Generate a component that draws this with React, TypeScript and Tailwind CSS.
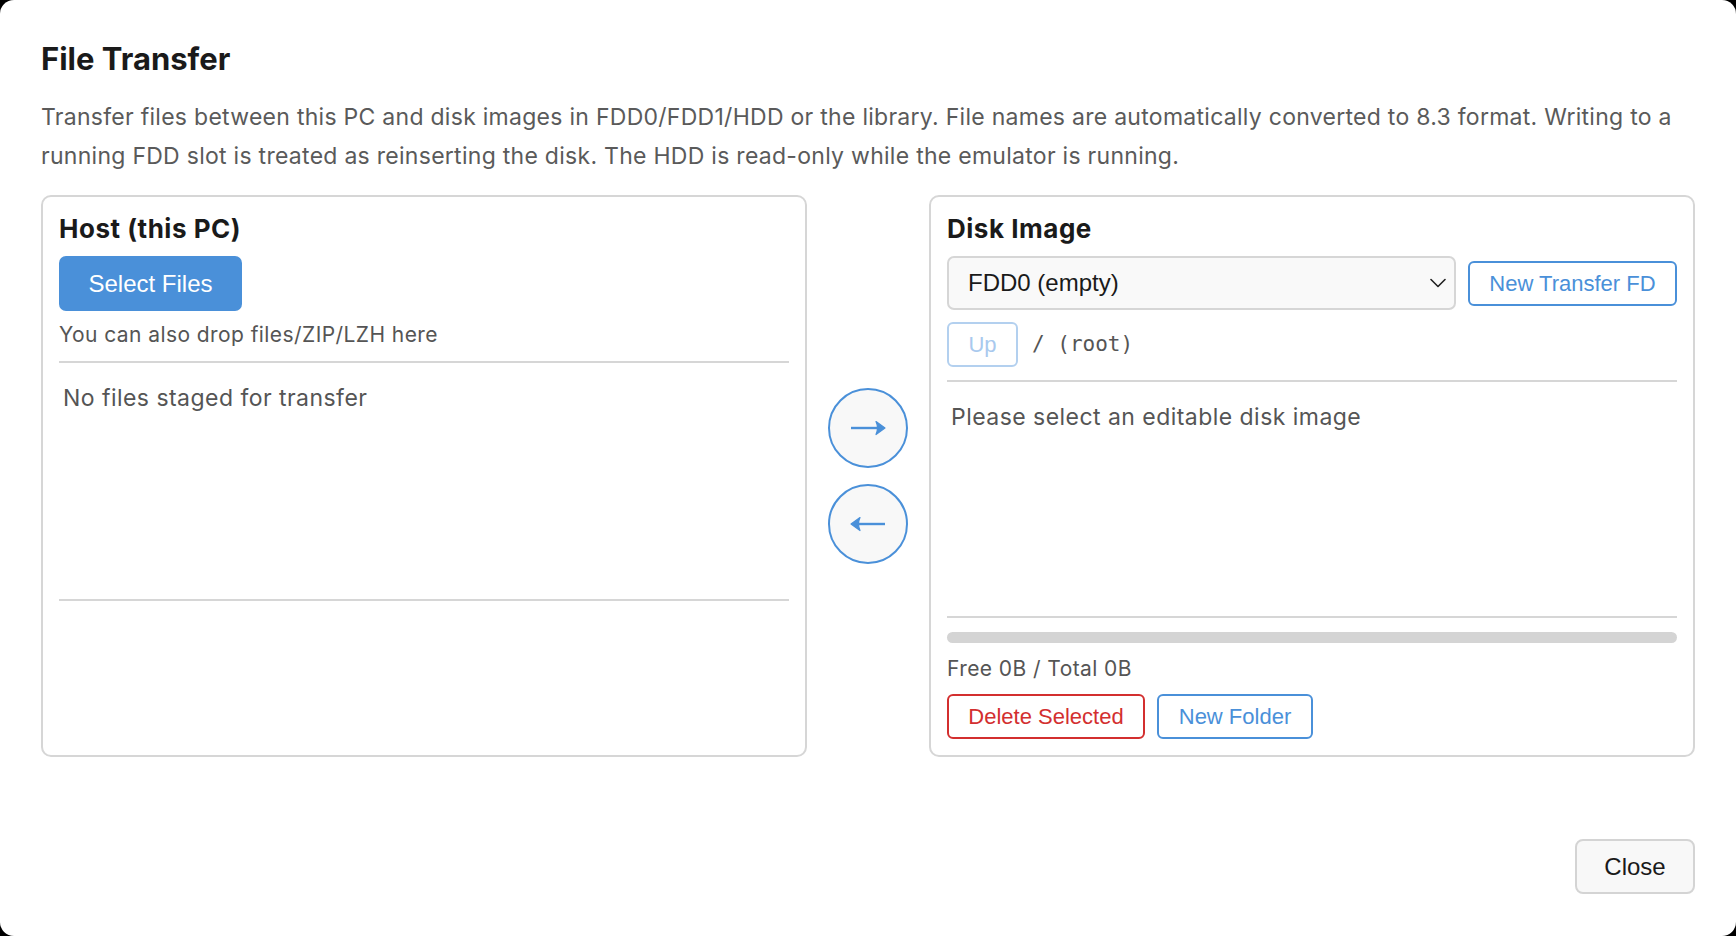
import React from "react";

const btnFont = "font-['Liberation_Sans',Arial,sans-serif]";

function ArrowIcon({ dir }: { dir: "right" | "left" }) {
  return (
    <svg
      width="36"
      height="16"
      viewBox="0 0 36 16"
      className={dir === "left" ? "-scale-x-100" : ""}
      fill="none"
    >
      <line x1="1" y1="8" x2="32" y2="8" stroke="#4a90d9" strokeWidth="2.4" />
      <path d="M26 1.5 L35 8 L26 14.5 Q29 8 26 1.5 Z" fill="#4a90d9" stroke="#4a90d9" strokeWidth="1.2" strokeLinejoin="round" />
    </svg>
  );
}

function Chevron() {
  return (
    <svg width="16" height="10" viewBox="0 0 16 10" fill="none">
      <path d="M1 1.5 L8 8.5 L15 1.5" stroke="#222" strokeWidth="1.6" strokeLinecap="round" strokeLinejoin="round" />
    </svg>
  );
}

function HostPanel() {
  return (
    <section className="flex-1 flex flex-col rounded-[10px] border-2 border-[#d6d6d6] px-4 pt-[16px] pb-4">
      <h2 className="text-[26px] leading-[32px] tracking-[0.02em] font-bold text-[#1a1a1a]">Host (this PC)</h2>
      <div className="mt-[11px]">
        <button className={`${btnFont} h-[55px] w-[183px] rounded-[7px] bg-[#4a90d9] text-[24px] text-white`}>
          Select Files
        </button>
      </div>
      <p className="mt-[10px] text-[21px] leading-[28px] tracking-[0.02em] text-[#555]">You can also drop files/ZIP/LZH here</p>
      <div className="mt-3 h-[240px] border-y-2 border-[#d6d6d6] px-1 pt-[19px]">
        <p className="text-[23px] leading-[32px] tracking-[0.02em] text-[#555]">No files staged for transfer</p>
      </div>
    </section>
  );
}

function DiskPanel() {
  return (
    <section className="flex-1 flex flex-col rounded-[10px] border-2 border-[#d6d6d6] px-4 pt-[16px] pb-4">
      <h2 className="text-[26px] leading-[32px] tracking-[0.02em] font-bold text-[#1a1a1a]">Disk Image</h2>
      <div className="mt-[11px] flex items-center gap-3">
        <div className={`${btnFont} flex h-[54px] flex-1 items-center justify-between rounded-[7px] border-2 border-[#d6d6d6] bg-[#f9f9f9] pl-[19px] pr-[8px] text-[24px] text-[#1a1a1a]`}>
          <span>FDD0 (empty)</span>
          <Chevron />
        </div>
        <button className={`${btnFont} h-[45px] w-[209px] rounded-[6px] border-2 border-[#4a90d9] bg-white text-[22px] text-[#4a90d9]`}>
          New Transfer FD
        </button>
      </div>
      <div className="mt-[12px] flex items-center gap-[14px]">
        <button className={`${btnFont} h-[45px] w-[71px] rounded-[6px] border-2 border-[#b3d0ef] bg-white text-[22px] text-[#a9c9ee]`}>
          Up
        </button>
        <span className="font-['DejaVu_Sans_Mono',monospace] text-[21px] text-[#555]">/ (root)</span>
      </div>
      <div className="mt-[13px] h-[242px] border-y-2 border-[#d6d6d6] px-1 pt-[19px]">
        <p className="text-[23px] leading-[32px] tracking-[0.02em] text-[#555]">Please select an editable disk image</p>
      </div>
      <div className="mt-[14px] h-[11px] rounded-full bg-[#d4d4d4]" />
      <p className="mt-[12px] text-[21px] leading-[28px] tracking-[0.02em] text-[#555]">Free 0B / Total 0B</p>
      <div className="mt-[11px] flex gap-3">
        <button className={`${btnFont} h-[45px] w-[198px] rounded-[6px] border-2 border-[#d32f2f] bg-white text-[22px] text-[#d32f2f]`}>
          Delete Selected
        </button>
        <button className={`${btnFont} h-[45px] w-[156px] rounded-[6px] border-2 border-[#4a90d9] bg-white text-[22px] text-[#4a90d9]`}>
          New Folder
        </button>
      </div>
    </section>
  );
}

export default function App() {
  return (
    <div className="h-screen w-full bg-black">
      <div className="flex h-full flex-col rounded-[14px] bg-white pl-[41px] pr-[41px] pt-[41px] pb-[42px] font-['Inter','Noto_Sans',sans-serif]">
        <h1 className="text-[31px] leading-[36px] font-bold text-[#1a1a1a]">File Transfer</h1>
        <p className="mt-[21px] text-[23px] leading-[39px] tracking-[0.012em] text-[#5a5a5a]">
          Transfer files between this PC and disk images in FDD0/FDD1/HDD or the library. File names are automatically converted to 8.3 format. Writing to a running FDD slot is treated as reinserting the disk. The HDD is read-only while the emulator is running.
        </p>

        <div className="mt-[19px] flex h-[562px] items-stretch">
          <HostPanel />
          <div className="flex w-[122px] flex-col items-center justify-center gap-4">
            <button className="flex h-[80px] w-[80px] items-center justify-center rounded-full border-2 border-[#4a90d9] bg-[#f8f8f8]">
              <ArrowIcon dir="right" />
            </button>
            <button className="flex h-[80px] w-[80px] items-center justify-center rounded-full border-2 border-[#4a90d9] bg-[#f8f8f8]">
              <ArrowIcon dir="left" />
            </button>
          </div>
          <DiskPanel />
        </div>

        <div className="mt-auto flex justify-end">
          <button className={`${btnFont} h-[55px] w-[120px] rounded-[8px] border-2 border-[#d4d4d4] bg-[#f8f8f8] text-[24px] text-[#1a1a1a]`}>
            Close
          </button>
        </div>
      </div>
    </div>
  );
}
